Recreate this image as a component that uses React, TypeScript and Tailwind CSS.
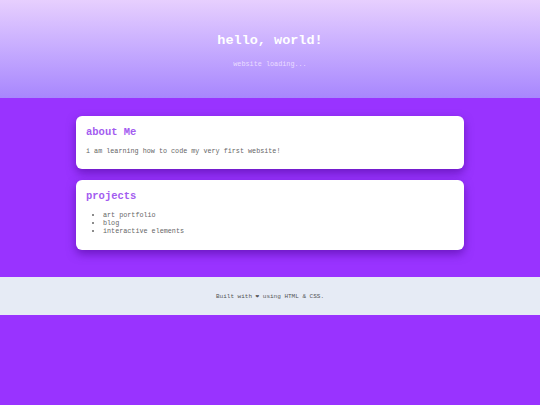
import React from 'react';

const mono = { fontFamily: '"Liberation Mono", "Courier New", monospace' };

const Card: React.FC<{ title: string; children: React.ReactNode }> = ({ title, children }) => (
  <section className="bg-white rounded-[6px] px-[10px] pt-[9px] pb-[13px] shadow-[0_4px_10px_rgba(70,0,140,0.55)]">
    <h2 className="text-[10.5px] font-bold text-[#a35cf0] leading-[14px] mb-[8px]">{title}</h2>
    {children}
  </section>
);

export default function App() {
  return (
    <div className="min-h-[405px] bg-[#9933ff]" style={mono}>
      {/* Header */}
      <header className="h-[98px] flex flex-col items-center justify-center bg-gradient-to-b from-[#e7cffe] to-[#a886fd]">
        <h1 className="text-[13.5px] font-bold text-white leading-[16px] mt-[4px]">hello, world!</h1>
        <p className="text-[6.8px] text-[#eadcff] mt-[10px]">website loading...</p>
      </header>

      <main className="w-[388px] mx-auto pt-[18px] pb-[27px] flex flex-col gap-[11px]">
        <Card title="about Me">
          <p className="text-[6.75px] text-[#666] leading-[9px]">i am learning how to code my very first website!</p>
        </Card>
        <Card title="projects">
          <ul className="list-disc pl-[17px] text-[6.75px] text-[#666] leading-[8px] pb-[2px]">
            <li>art portfolio</li>
            <li>blog</li>
            <li>interactive elements</li>
          </ul>
        </Card>
      </main>

      <footer className="h-[38px] bg-[#e6ebf5] flex items-center justify-center">
        <p className="text-[6px] text-[#555]">Built with ❤ using HTML &amp; CSS.</p>
      </footer>
    </div>
  );
}
